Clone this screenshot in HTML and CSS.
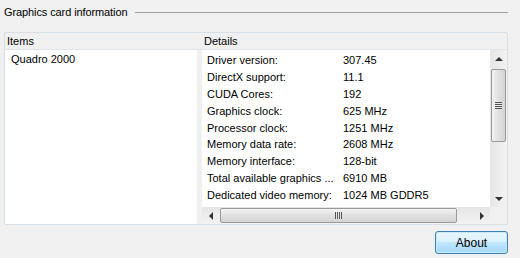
FILE: index.html
```html
<!DOCTYPE html>
<html lang="en">
<head>
  <meta charset="UTF-8" />
  <title>Graphics card information</title>
  <link rel="stylesheet" href="styles.css">
</head>
<body>
  <div class="window">
    <div class="group-title">
      <span>Graphics card information</span>
      <div class="rule"></div>
    </div>

    <div class="panel">
      <div class="panel-head">
        <div class="col-items">Items</div>
        <div class="col-details">Details</div>
      </div>
      <div class="panel-body">
        <div class="items">
          <div class="item">Quadro 2000</div>
        </div>
        <div class="splitter"></div>
        <div class="details">
          <div class="details-main">
            <div class="rows">
              <div class="row"><span class="label">Driver version:</span><span>307.45</span></div>
              <div class="row"><span class="label">DirectX support:</span><span>11.1</span></div>
              <div class="row"><span class="label">CUDA Cores:</span><span>192</span></div>
              <div class="row"><span class="label">Graphics clock:</span><span>625 MHz</span></div>
              <div class="row"><span class="label">Processor clock:</span><span>1251 MHz</span></div>
              <div class="row"><span class="label">Memory data rate:</span><span>2608 MHz</span></div>
              <div class="row"><span class="label">Memory interface:</span><span>128-bit</span></div>
              <div class="row"><span class="label">Total available graphics ...</span><span>6910 MB</span></div>
              <div class="row"><span class="label">Dedicated video memory:</span><span>1024 MB GDDR5</span></div>
            </div>
            <div class="vscroll">
              <div class="arrow"><span class="tri up"></span></div>
              <div class="track">
                <div class="vthumb"><span class="grip"></span></div>
              </div>
              <div class="arrow"><span class="tri down"></span></div>
            </div>
          </div>
          <div class="hscroll">
            <div class="arrow"><span class="tri left"></span></div>
            <div class="track">
              <div class="hthumb"><span class="grip"></span></div>
            </div>
            <div class="arrow"><span class="tri right"></span></div>
            <div class="corner"></div>
          </div>
        </div>
      </div>
    </div>

    <div class="actions">
      <button class="btn">About</button>
    </div>
  </div>
</body>
</html>
```

FILE: styles.css
```css
body {
  margin: 0;
  background: #f0f0f0;
  font-family: 'Liberation Sans', Arial, sans-serif;
  font-size: 11px;
  color: #000;
}

.window {
  width: 520px;
  height: 258px;
  padding: 4px 12px 0 4px;
  box-sizing: border-box;
}

.group-title {
  display: flex;
  align-items: center;
  height: 16px;
}

.group-title span {
  padding-right: 8px;
  letter-spacing: -0.1px;
}

.rule {
  flex: 1;
  height: 1px;
  background: #a0a0a0;
}

.panel {
  margin-top: 12px;
  border: 1px solid #d5dfe5;
  border-radius: 2px;
  height: 191px;
  display: flex;
  flex-direction: column;
}

.panel-head {
  display: flex;
  height: 16px;
  align-items: center;
  border-bottom: 1px solid #dde4ea;
}

.col-items {
  width: 196px;
  padding-left: 2px;
}

.col-details {
  padding-left: 1px;
}

.panel-body {
  flex: 1;
  display: flex;
  min-height: 0;
}

.items {
  width: 192px;
  box-sizing: border-box;
  background: #fff;
  padding: 3px 0 0 6px;
}

.splitter {
  width: 5px;
  background: #f0f0f0;
}

.details {
  flex: 1;
  display: flex;
  flex-direction: column;
  background: #fff;
}

.details-main {
  flex: 1;
  display: flex;
  min-height: 0;
}

.rows {
  flex: 1;
  padding: 2px 0 0 5px;
  overflow: hidden;
}

.row {
  display: flex;
  height: 16.9px;
  line-height: 16px;
  white-space: nowrap;
}

.label {
  width: 136px;
}

/* scrollbars */
.vscroll {
  width: 17px;
  display: flex;
  flex-direction: column;
  background: linear-gradient(to right, #e6e6e6, #f2f2f2);
}

.vscroll .arrow {
  height: 17px;
}

.vscroll .track {
  flex: 1;
  padding-top: 2px;
}

.vthumb {
  margin: 0 1px;
  height: 73px;
  border: 1px solid #9a9a9a;
  border-radius: 2px;
  background: linear-gradient(to right, #f3f3f3, #e0e0e0 50%, #d4d4d4);
  display: flex;
  align-items: center;
  justify-content: center;
  box-sizing: border-box;
}

.vthumb .grip {
  width: 7px;
  height: 7px;
  background: repeating-linear-gradient(to bottom, #555 0 1px, #e8e8e8 1px 2px);
}

.hscroll {
  height: 17px;
  display: flex;
  background: linear-gradient(to bottom, #e6e6e6, #f2f2f2);
}

.hscroll .arrow {
  width: 17px;
}

.hscroll .track {
  flex: 1;
  padding-left: 1px;
  display: flex;
}

.hthumb {
  margin: 1px 0;
  width: 237px;
  border: 1px solid #9a9a9a;
  border-radius: 2px;
  background: linear-gradient(to bottom, #f3f3f3, #e0e0e0 50%, #d4d4d4);
  display: flex;
  align-items: center;
  justify-content: center;
  box-sizing: border-box;
}

.hthumb .grip {
  width: 7px;
  height: 7px;
  background: repeating-linear-gradient(to right, #555 0 1px, #e8e8e8 1px 2px);
}

.corner {
  width: 17px;
  background: #f0f0f0;
}

.arrow {
  display: flex;
  align-items: center;
  justify-content: center;
}

.tri {
  width: 0;
  height: 0;
}

.tri.up {
  border-left: 4px solid transparent;
  border-right: 4px solid transparent;
  border-bottom: 4px solid #333;
}

.tri.down {
  border-left: 4px solid transparent;
  border-right: 4px solid transparent;
  border-top: 4px solid #333;
}

.tri.left {
  border-top: 4px solid transparent;
  border-bottom: 4px solid transparent;
  border-right: 4px solid #333;
}

.tri.right {
  border-top: 4px solid transparent;
  border-bottom: 4px solid transparent;
  border-left: 4px solid #333;
}

.actions {
  display: flex;
  justify-content: flex-end;
  margin-top: 6px;
}

.btn {
  width: 73px;
  height: 23px;
  border: 1px solid #3c7fb1;
  border-radius: 3px;
  background: linear-gradient(to bottom, #eaf6fd 0%, #d9f0fc 50%, #bee6fd 50%, #a7d9f5 100%);
  box-shadow: inset 0 0 0 1px #c8eafc;
  font-family: 'Liberation Sans', Arial, sans-serif;
  font-size: 12px;
  color: #000;
  padding: 0;
}
```
